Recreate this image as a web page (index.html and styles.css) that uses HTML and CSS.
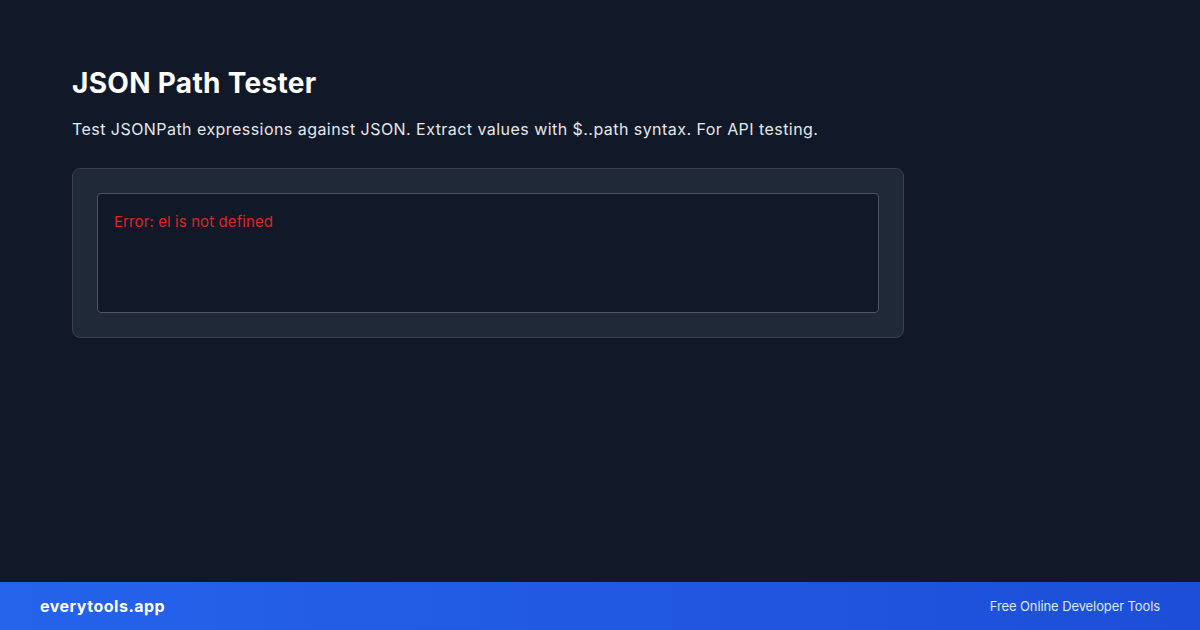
FILE: index.html
```html
<!DOCTYPE html>
<html lang="en">
<head>
  <meta charset="UTF-8" />
  <meta name="viewport" content="width=device-width, initial-scale=1" />
  <title>JSON Path Tester</title>
  <link rel="stylesheet" href="styles.css">
</head>
<body>
  <main class="page">
    <h1>JSON Path Tester</h1>
    <p class="lead">Test JSONPath expressions against JSON. Extract values with $..path syntax. For API testing.</p>

    <div class="tool">
      <div class="output">Error: el is not defined</div>
    </div>
  </main>

  <footer class="footer">
    <div class="brand">everytools.app</div>
    <div class="tagline">Free Online Developer Tools</div>
  </footer>
</body>
</html>
```

FILE: styles.css
```css
* {
  box-sizing: border-box;
}
html, body {
  height: 100%;
}
body {
  margin: 0;
  font-family: Inter, "Noto Sans", sans-serif;
  background-color: #111827;
  color: #f9fafb;
  display: flex;
  flex-direction: column;
}
.page {
  flex: 1;
  padding: 66px 72px 0;
  width: 832px;
  box-sizing: content-box;
}
h1 {
  margin: 0 0 17px;
  font-size: 28px;
  line-height: 34px;
  font-weight: 700;
  letter-spacing: 0.3px;
  color: #ffffff;
}
.lead {
  margin: 0 0 27px;
  font-size: 16px;
  line-height: 24px;
  letter-spacing: 0.45px;
  color: #e5e7eb;
}
.tool {
  background: #1f2937;
  border: 1px solid #374151;
  border-radius: 8px;
  padding: 24px;
}
.output {
  min-height: 120px;
  background: #111827;
  border: 1px solid #4b5563;
  border-radius: 4px;
  padding: 16px;
  font-size: 15px;
  line-height: 24px;
  letter-spacing: 0.1px;
  color: #dc2626;
}
.footer {
  height: 48px;
  padding: 0 40px;
  display: flex;
  align-items: center;
  justify-content: space-between;
  background: linear-gradient(90deg, #2563eb, #1d4ed8);
}
.brand {
  font-size: 16px;
  font-weight: 700;
  letter-spacing: 0.5px;
  color: #ffffff;
}
.tagline {
  font-size: 13px;
  letter-spacing: -0.1px;
  color: #dbeafe;
}
```
